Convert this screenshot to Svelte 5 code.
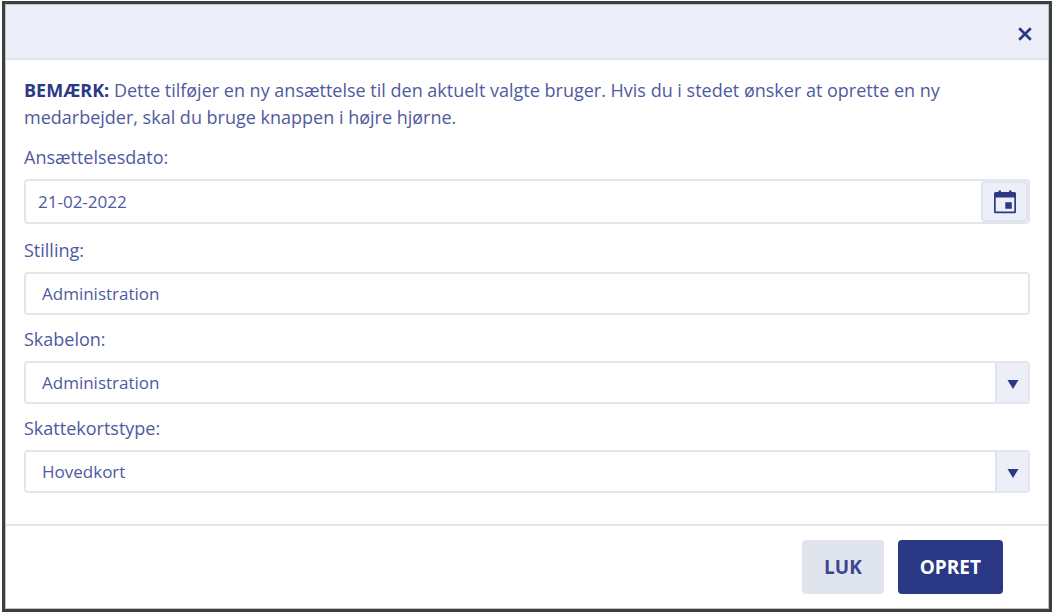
<script>
  let date = $state('21-02-2022');
  let position = $state('Administration');
  let template = $state('Administration');
  let taxCard = $state('Hovedkort');
</script>

<div class="backdrop">
  <div class="dialog" role="dialog" aria-modal="true" aria-describedby="note">
    <header>
      <button class="close" type="button" aria-label="Luk vindue">
        <svg width="14" height="14" viewBox="0 0 14 14" aria-hidden="true">
          <path d="M1.2 1.200 12.800 12.800M12.800 1.200 1.200 12.800" fill="none" stroke="currentColor" stroke-width="2.7" />
        </svg>
      </button>
    </header>

    <form>
      <p id="note">
        <strong>BEMÆRK:</strong> Dette tilføjer en ny ansættelse til den aktuelt valgte bruger. Hvis du i stedet ønsker at oprette en ny medarbejder, skal du bruge knappen i højre hjørne.
      </p>

      <label for="date">Ansættelsesdato:</label>
      <div class="field date">
        <input id="date" type="text" bind:value={date} />
        <button class="calendar" type="button" aria-label="Vælg dato">
          <svg width="24" height="24" viewBox="0 0 24 24" aria-hidden="true">
            <path
              fill="currentColor"
              fill-rule="evenodd"
              d="M5.500.6h2.500V2h8V.6h2.500V2H21.500A1.500 1.500 0 0 1 23 3.500v18.200a1.500 1.500 0 0 1-1.500 1.500h-19A1.500 1.500 0 0 1 1 21.700V3.500A1.500 1.500 0 0 1 2.500 2h3zM2.700 7.500v14h18.600v-14zM12.300 12.300h6.500v6.500h-6.500z"
            />
          </svg>
        </button>
      </div>

      <label for="position">Stilling:</label>
      <div class="field">
        <input id="position" type="text" bind:value={position} />
      </div>

      <label for="template">Skabelon:</label>
      <div class="field">
        <select id="template" bind:value={template}>
          <option>Administration</option>
        </select>
        <span class="arrow" aria-hidden="true">
          <svg width="12" height="9" viewBox="0 0 12 9"><path d="M.5 0h11L6 9z" fill="currentColor" /></svg>
        </span>
      </div>

      <label for="tax">Skattekortstype:</label>
      <div class="field">
        <select id="tax" bind:value={taxCard}>
          <option>Hovedkort</option>
        </select>
        <span class="arrow" aria-hidden="true">
          <svg width="12" height="9" viewBox="0 0 12 9"><path d="M.5 0h11L6 9z" fill="currentColor" /></svg>
        </span>
      </div>
    </form>

    <footer>
      <button class="action" type="button">LUK</button>
      <button class="action primary" type="button">OPRET</button>
    </footer>
  </div>
</div>

<style>
  :global(body) {
    background: #fff;
  }
  * {
    box-sizing: border-box;
  }
  .backdrop {
    margin: 1px 4px 3px 2px;
    padding: 3px;
    background: #3c3f3e;
  }
  .dialog {
    border: 1px solid #bcc0cb;
    background: #fff;
    color: #4f5aa0;
    font: 18px/27px 'Open Sans', sans-serif;
  }
  header {
    display: flex;
    justify-content: flex-end;
    align-items: center;
    height: 55px;
    padding: 5px 15px 0;
    border-bottom: 2px solid #e1e4f0;
    background: #eceef8;
  }
  button {
    margin: 0;
    font: inherit;
    cursor: pointer;
  }
  .close {
    display: flex;
    padding: 1px;
    border: 0;
    background: none;
    color: #2b3886;
  }
  form {
    padding: 17px 18px 31px;
  }
  p {
    margin: 0 0 13px;
  }
  strong {
    color: #2b3886;
  }
  label {
    display: block;
    margin-bottom: 8px;
  }
  .field {
    display: flex;
    height: 43px;
    margin-bottom: 11px;
    overflow: hidden;
    border: 2px solid #e3e6ed;
    border-radius: 4px;
    background: #fff;
  }
  .field:last-child {
    margin-bottom: 0;
  }
  .date {
    height: 45px;
    margin-bottom: 13px;
  }
  input,
  select {
    flex: 1;
    min-width: 0;
    margin: 0;
    padding: 0 16px;
    border: 0;
    outline: 0;
    appearance: none;
    background: none;
    color: inherit;
    font: 17px/24px 'Open Sans', sans-serif;
  }
  .date input {
    padding: 0 12px;
  }
  .calendar {
    display: flex;
    align-items: center;
    justify-content: center;
    width: 47px;
    padding: 0;
    border: 2px solid #dfe2ef;
    border-radius: 4px;
    background: #eceef8;
    color: #2b3886;
  }
  .arrow {
    display: flex;
    align-items: center;
    justify-content: center;
    width: 33px;
    padding-top: 4px;
    border-left: 2px solid #dfe2ef;
    background: #eceef8;
    color: #2b3886;
    pointer-events: none;
  }
  footer {
    display: flex;
    justify-content: flex-end;
    gap: 14px;
    padding: 14px 45px 14px 18px;
    border-top: 2px solid #e3e7ec;
  }
  .action {
    height: 54px;
    padding: 0 22px;
    border: 0;
    border-radius: 4px;
    background: #e0e4ed;
    color: #3b4790;
    font-size: 19px;
    font-weight: 700;
  }
  .primary {
    background: #2b3886;
    color: #fff;
  }
</style>
